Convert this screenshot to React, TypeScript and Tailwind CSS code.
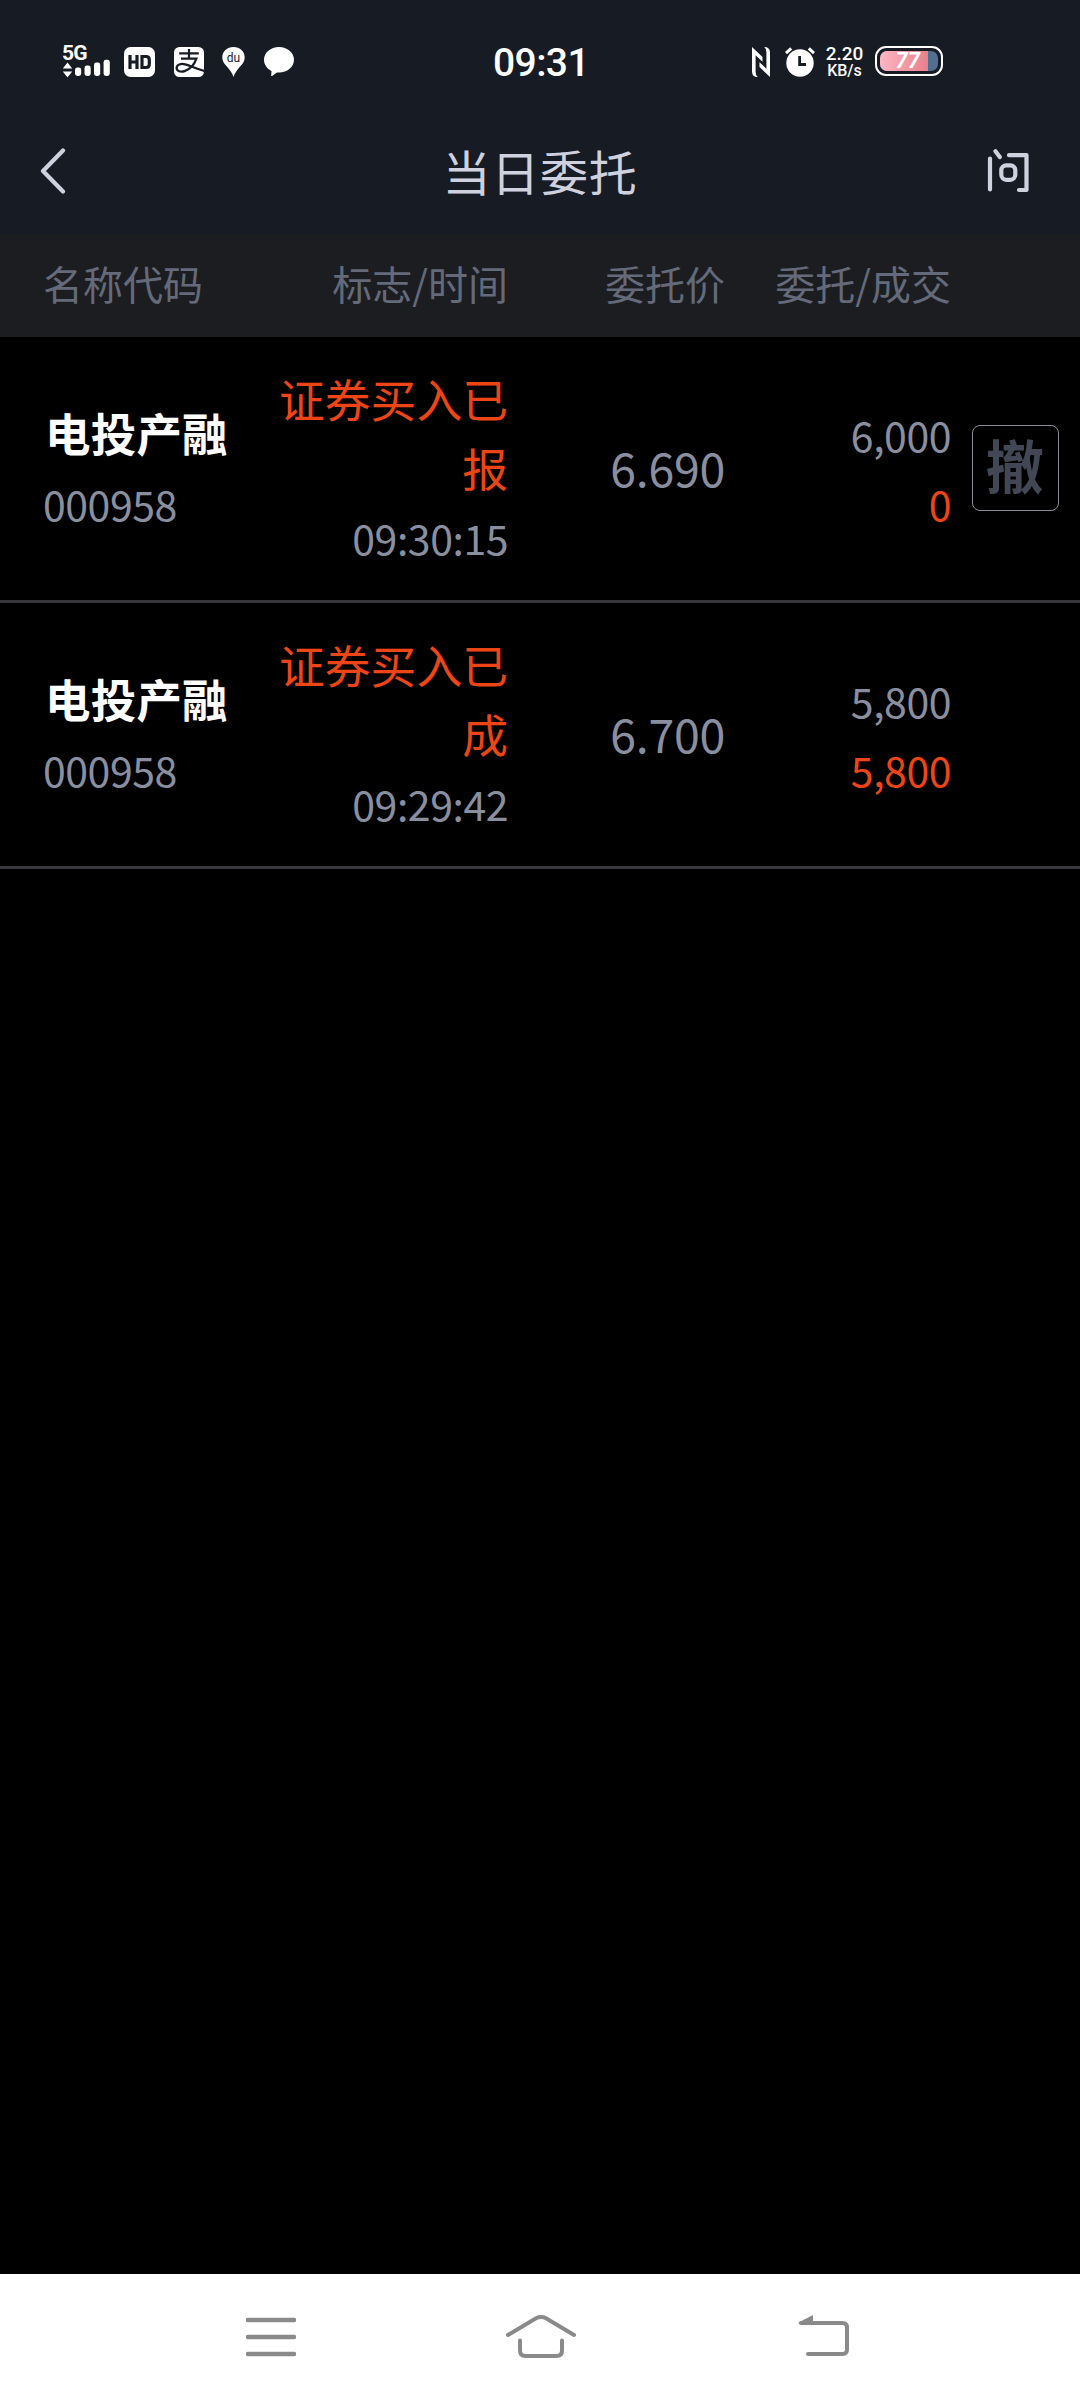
import React from "react";

interface Order {
  id: string;
  name: string;
  code: string;
  status: string;
  time: string;
  price: string;
  amount: string;
  filled: string;
  cancelable: boolean;
}

const orders: Order[] = [
  {
    id: "1",
    name: "电投产融",
    code: "000958",
    status: "证券买入已报",
    time: "09:30:15",
    price: "6.690",
    amount: "6,000",
    filled: "0",
    cancelable: true,
  },
  {
    id: "2",
    name: "电投产融",
    code: "000958",
    status: "证券买入已成",
    time: "09:29:42",
    price: "6.700",
    amount: "5,800",
    filled: "5,800",
    cancelable: false,
  },
];

const SignalIcon = () => (
  <div className="flex w-12 flex-col">
    <span className="text-[21px] leading-[17px] font-bold tracking-[-0.8px]">5G</span>
    {/* the tallest bar reaches above the svg box, next to the label */}
    <svg className="overflow-visible" width="48" height="16" viewBox="0 17 48 16" fill="#fff">
      <path d="M5.5 17.5l4.7 6H.8zM5.5 32.500l4.7-6H.8z" />
      <rect x="13" y="22.5" width="6.2" height="8.5" rx="2.4" />
      <rect x="22.5" y="20.5" width="6.2" height="10.5" rx="2.4" />
      <rect x="32" y="17.5" width="6.2" height="13.5" rx="2.4" />
      <rect x="41.6" y="14.8" width="6.2" height="16.2" rx="2.4" />
    </svg>
  </div>
);

const HdIcon = () => (
  <svg width="31" height="30" viewBox="0 0 31 30">
    <rect width="31" height="30" rx="6.5" fill="#fff" />
    <path
      d="M6 8v14M13 8v14M6 15h7M18 9.5h4q3.3 0 3.3 3.3v4.4q0 3.3-3.3 3.3h-4z"
      fill="none"
      stroke="#171b24"
      strokeWidth="3.2"
    />
  </svg>
);

const PayIcon = () => (
  <svg width="30" height="30" viewBox="0 0 30 30">
    <rect width="30" height="30" rx="5.5" fill="#fff" />
    <path
      d="M5.2 6.4h19.6M15 2v9.7M7 11.7h15.4C20.6 17 16 22.3 10.6 24.1c-4 1.3-8 .1-8-3.1 0-3.4 4.3-4.8 8.6-3.6 5.8 1.6 12 4.7 19 6.5"
      fill="none"
      stroke="#171b24"
      strokeWidth="2.2"
    />
  </svg>
);

const PinIcon = () => (
  <svg width="23" height="30" viewBox="0 0 23 30">
    <path
      d="M11.5 0C5 0 .3 4.6 .3 10.5c0 4 2.3 6.6 4.8 9.3 2.9 3.2 5.3 6.5 6.4 10.2 1.1-3.7 3.5-7 6.4-10.2 2.5-2.7 4.8-5.3 4.8-9.3C22.7 4.6 18 0 11.5 0z"
      fill="#fff"
    />
    <text x="11.5" y="15" fontSize="12" textAnchor="middle" fill="#171b24" fontFamily="Roboto, sans-serif">
      du
    </text>
  </svg>
);

const BubbleIcon = () => (
  <svg width="30" height="30" viewBox="0 0 30 30" fill="#fff">
    <path d="M15 0C6.7 0 0 5.6 0 12.8c0 4.8 3 9 7.5 11.2L7.2 28.5c0 .5.5.7.9.4l4.8-3.4c.7.1 1.4.1 2.1.1 8.3 0 15-5.6 15-12.8S23.3 0 15 0z" />
  </svg>
);

const NfcIcon = () => (
  <svg width="18" height="30" viewBox="0 0 18 30" fill="#fff">
    <path d="M0 0L10.5 10V14.8L3.6 8.2V25Q3.6 28.5 5.8 30Q0 30 0 24.5z" />
    <path d="M18 30L7.5 20V15.2L14.4 21.8V5Q14.4 1.5 12.2 0Q18 0 18 5.5z" />
  </svg>
);

const AlarmIcon = () => (
  <svg width="30" height="30" viewBox="0 0 30 30">
    <circle cx="15" cy="16" r="13.7" fill="#fff" />
    <path d="M1 6.2L6.2 1.4M29 6.2L23.8 1.4" stroke="#fff" strokeWidth="3" />
    <path d="M14.6 9v8.5h6.4" fill="none" stroke="#171b24" strokeWidth="2.8" />
  </svg>
);

const StatusBar = () => (
  <div className="flex h-[110px] items-start pl-[62px] font-[Roboto,sans-serif] text-white">
    <div className="flex w-[431px] items-start pt-[47px]">
      <div className="-mt-0.5">
        <SignalIcon />
      </div>
      <div className="ml-3.5">
        <HdIcon />
      </div>
      <div className="ml-[19px]">
        <PayIcon />
      </div>
      <div className="ml-[18px]">
        <PinIcon />
      </div>
      <div className="ml-[19px]">
        <BubbleIcon />
      </div>
    </div>
    <div className="w-[259px] pt-[43px] text-[39px] leading-10 font-medium tracking-[-0.6px]">09:31</div>
    <div className="flex items-start pt-[47px]">
      <NfcIcon />
      <div className="ml-[15px]">
        <AlarmIcon />
      </div>
      <div className="-mt-0.5 ml-2.5 flex w-[39px] flex-col items-center font-medium">
        <span className="text-[19px] leading-[18px]">2.20</span>
        <span className="text-[16px] leading-4">KB/s</span>
      </div>
      <div className="-mt-px ml-[11px] flex h-[30px] w-[68px] rounded-[11px] border-2 border-white p-[3px]">
        <div className="flex h-full w-full rounded-[7px] bg-[#51708f]">
          <div className="flex h-full w-12 items-center justify-end rounded-l-[7px] bg-linear-to-r from-[#fcb6c3] to-[#e9808c] pr-2 text-[22px] leading-5 font-bold italic">
            77
          </div>
        </div>
      </div>
    </div>
  </div>
);

const TitleBar = () => (
  <div className="flex h-[124px] items-center justify-between pr-[51px] pl-10 text-[#cfd2de]">
    <button type="button" aria-label="返回" className="-mt-[3px] w-[41px]">
      <svg
        width="26"
        height="46"
        viewBox="0 0 26 46"
        fill="none"
        stroke="currentColor"
        strokeWidth="4.2"
        strokeLinecap="round"
        strokeLinejoin="round"
      >
        <path d="M23 2.5L3 23L23 43.5" />
      </svg>
    </button>
    <h1 className="-mt-1 ml-3 text-[48px] leading-none tracking-[0.8px]">当日委托</h1>
    <button type="button" aria-label="提问" className="-mt-1">
      <svg
        width="42"
        height="46"
        viewBox="0 0 42 46"
        fill="none"
        stroke="currentColor"
        strokeWidth="4.2"
        strokeLinecap="round"
        strokeLinejoin="round"
      >
        <path d="M3 11.5V42.5M8.5 4.2L12.8 10M22 8.2H39.5V43H32" />
        <rect x="14.3" y="18.3" width="14" height="14.5" rx="5" />
      </svg>
    </button>
  </div>
);

const TableHeader = () => (
  <div className="grid h-[103px] grid-cols-[235px_230px_217px_226px] items-center bg-[#1c1d20] pb-1.5 pl-[43px] text-right text-[40px] leading-none text-[#646a7a]">
    <div className="text-left">名称代码</div>
    <div>标志/时间</div>
    <div>委托价</div>
    <div>委托/成交</div>
  </div>
);

const OrderRow = ({ order }: { order: Order }) => (
  <div className="grid h-[266px] grid-cols-[235px_230px_217px_226px_129px] items-center border-b-3 border-[#37373b] pl-[43px] text-right text-[41px] leading-[69px] tracking-[-0.45px] text-[#8a8fa0]">
    <div className="text-left">
      <div className="-mt-0.5 mb-0.5 pl-0.5 text-[45.5px] font-bold tracking-[0.2px] text-white">{order.name}</div>
      <div>{order.code}</div>
    </div>
    <div>
      <div className="-mt-px mb-px text-[45.8px] tracking-normal text-[#ee4516]">{order.status}</div>
      <div>{order.time}</div>
    </div>
    <div className="-mt-1 text-[46.5px] tracking-[-0.3px]">{order.price}</div>
    <div>
      <div>{order.amount}</div>
      <div className="text-[#ee4516]">{order.filled}</div>
    </div>
    {order.cancelable && (
      <button
        type="button"
        className="-mt-px ml-[21px] flex h-[86px] w-[87px] items-center justify-center rounded-lg border border-[#8a8d99] pr-0.5 pb-2 text-[58px] leading-none font-bold text-[#414754]"
      >
        撤
      </button>
    )}
  </div>
);

const NavBar = () => (
  <div className="flex h-[126px] items-center bg-white pl-[246px] text-[#8a8a8a]">
    <svg width="50" height="44" viewBox="0 0 50 44" fill="none" stroke="currentColor" strokeWidth="4.6" strokeLinecap="round">
      <path d="M2 5H48M2 22H48M2 39H48" />
    </svg>
    <svg
      className="ml-[210px]"
      width="70"
      height="44"
      viewBox="0 0 70 44"
      fill="none"
      stroke="currentColor"
      strokeWidth="4"
      strokeLinecap="round"
    >
      <path d="M2 20L30 3.3Q35 .8 40 3.3L68 20" />
      <path d="M14 25.5V35.5Q14 41 19.5 41H50.5Q56 41 56 35.5V25.5" />
    </svg>
    <svg
      className="ml-[222px]"
      width="52"
      height="44"
      viewBox="0 0 52 44"
      fill="none"
      stroke="currentColor"
      strokeWidth="4"
      strokeLinecap="round"
    >
      <path d="M3 8H44.5Q49 8 49 12.5V34.5Q49 39 44.5 39H10" />
      <path d="M.5 7.5L15 0V9H1z" fill="currentColor" stroke="none" />
    </svg>
  </div>
);

export default function App() {
  return (
    <div className="flex h-[2400px] w-[1080px] flex-col bg-black font-['Noto_Sans_CJK_SC',sans-serif]">
      <header className="bg-[#171b24]">
        <StatusBar />
        <TitleBar />
      </header>
      <TableHeader />
      <main className="flex-1">
        {orders.map((order) => (
          <OrderRow key={order.id} order={order} />
        ))}
      </main>
      <NavBar />
    </div>
  );
}
